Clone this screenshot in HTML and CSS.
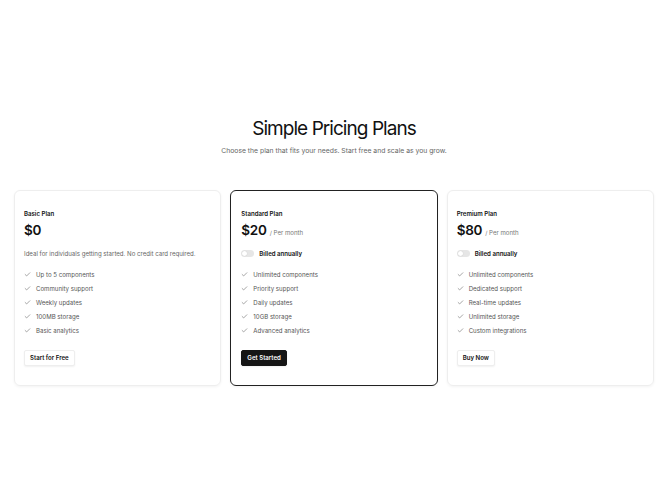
FILE: index.html
```html
<!DOCTYPE html>
<html lang="en">
<head>
    <meta charset="UTF-8">
    <meta name="viewport" content="width=device-width, initial-scale=1.0">
    <title>Simple Pricing Plans</title>
    <link rel="stylesheet" href="styles.css">
</head>
<body>
    <main class="pricing">
        <div class="pricing-header">
            <h1>Simple Pricing Plans</h1>
            <p>Choose the plan that fits your needs. Start free and scale as you grow.</p>
        </div>
        <div class="plans">
            <div class="plan">
                <h3>Basic Plan</h3>
                <div class="price"><span class="amount">$0</span></div>
                <p class="desc">Ideal for individuals getting started. No credit card required.</p>
                <ul class="features">
                    <li><svg viewBox="0 0 24 24"><path d="M20 6 9 17l-5-5"/></svg>Up to 5 components</li>
                    <li><svg viewBox="0 0 24 24"><path d="M20 6 9 17l-5-5"/></svg>Community support</li>
                    <li><svg viewBox="0 0 24 24"><path d="M20 6 9 17l-5-5"/></svg>Weekly updates</li>
                    <li><svg viewBox="0 0 24 24"><path d="M20 6 9 17l-5-5"/></svg>100MB storage</li>
                    <li><svg viewBox="0 0 24 24"><path d="M20 6 9 17l-5-5"/></svg>Basic analytics</li>
                </ul>
                <button class="btn">Start for Free</button>
            </div>
            <div class="plan featured">
                <h3>Standard Plan</h3>
                <div class="price"><span class="amount">$20</span><span class="per">/ Per month</span></div>
                <label class="billing"><span class="toggle"></span>Billed annually</label>
                <ul class="features">
                    <li><svg viewBox="0 0 24 24"><path d="M20 6 9 17l-5-5"/></svg>Unlimited components</li>
                    <li><svg viewBox="0 0 24 24"><path d="M20 6 9 17l-5-5"/></svg>Priority support</li>
                    <li><svg viewBox="0 0 24 24"><path d="M20 6 9 17l-5-5"/></svg>Daily updates</li>
                    <li><svg viewBox="0 0 24 24"><path d="M20 6 9 17l-5-5"/></svg>10GB storage</li>
                    <li><svg viewBox="0 0 24 24"><path d="M20 6 9 17l-5-5"/></svg>Advanced analytics</li>
                </ul>
                <button class="btn btn-dark">Get Started</button>
            </div>
            <div class="plan">
                <h3>Premium Plan</h3>
                <div class="price"><span class="amount">$80</span><span class="per">/ Per month</span></div>
                <label class="billing"><span class="toggle"></span>Billed annually</label>
                <ul class="features">
                    <li><svg viewBox="0 0 24 24"><path d="M20 6 9 17l-5-5"/></svg>Unlimited components</li>
                    <li><svg viewBox="0 0 24 24"><path d="M20 6 9 17l-5-5"/></svg>Dedicated support</li>
                    <li><svg viewBox="0 0 24 24"><path d="M20 6 9 17l-5-5"/></svg>Real-time updates</li>
                    <li><svg viewBox="0 0 24 24"><path d="M20 6 9 17l-5-5"/></svg>Unlimited storage</li>
                    <li><svg viewBox="0 0 24 24"><path d="M20 6 9 17l-5-5"/></svg>Custom integrations</li>
                </ul>
                <button class="btn">Buy Now</button>
            </div>
        </div>
    </main>
</body>
</html>
```

FILE: styles.css
```css
body {
    font-family: Inter, "Noto Sans", sans-serif;
    margin: 0;
    padding: 0;
    background-color: #fff;
    color: #111;
    min-height: 100vh;
    display: flex;
    flex-direction: column;
    justify-content: center;
}
.pricing {
    width: 640px;
    margin: 0 auto;
}
.pricing-header {
    text-align: center;
    margin-bottom: 33px;
}
.pricing-header h1 {
    margin: 0;
    font-size: 19px;
    line-height: 26px;
    font-weight: 400;
    letter-spacing: -0.05em;
}
.pricing-header p {
    margin: 3px 0 0;
    font-size: 6.8px;
    line-height: 12px;
    color: #666;
}
.plans {
    display: grid;
    grid-template-columns: repeat(3, 1fr);
    gap: 9px;
}
.plan {
    border: 1px solid #eee;
    border-radius: 6px;
    padding: 18px 9px 19px;
    box-shadow: 0 1px 3px rgba(0, 0, 0, 0.05);
}
.plan.featured {
    border: 1.5px solid #222;
    padding: 18px 10px 19px;
}
.plan h3 {
    margin: 0 0 2px;
    font-size: 6.1px;
    line-height: 10px;
    font-weight: 600;
}
.price {
    display: flex;
    align-items: baseline;
    gap: 3px;
    height: 18px;
    line-height: 18px;
    margin-bottom: 10px;
}
.price .amount {
    font-size: 13.5px;
    font-weight: 600;
    letter-spacing: -0.02em;
}
.price .per {
    font-size: 6.1px;
    line-height: 10px;
    color: #777;
}
.desc {
    margin: 0;
    font-size: 6.1px;
    line-height: 10px;
    color: #666;
}
.billing {
    display: flex;
    align-items: center;
    gap: 5px;
    height: 10px;
    font-size: 6.1px;
    line-height: 10px;
    font-weight: 600;
}
.toggle {
    width: 13px;
    height: 7px;
    border-radius: 4px;
    background-color: #e6e6e6;
    position: relative;
}
.toggle::after {
    content: "";
    position: absolute;
    top: 1px;
    left: 1px;
    width: 5px;
    height: 5px;
    border-radius: 50%;
    background-color: #fff;
    box-shadow: 0 0 1px rgba(0, 0, 0, 0.2);
}
.features {
    list-style: none;
    margin: 11px 0 0;
    padding: 0;
    display: flex;
    flex-direction: column;
    gap: 4px;
}
.features li {
    display: flex;
    align-items: center;
    gap: 5px;
    font-size: 6.1px;
    line-height: 10px;
    color: #555;
}
.features svg {
    width: 7px;
    height: 7px;
    fill: none;
    stroke: #666;
    stroke-width: 2;
    stroke-linecap: round;
    stroke-linejoin: round;
}
.btn {
    margin-top: 14px;
    height: 16px;
    padding: 0 5px;
    font-family: inherit;
    font-size: 6.1px;
    font-weight: 600;
    color: #111;
    background-color: #fff;
    border: 1px solid #eee;
    border-radius: 2px;
    box-shadow: 0 1px 2px rgba(0, 0, 0, 0.06);
    cursor: pointer;
}
.btn-dark {
    background-color: #151515;
    border-color: #151515;
    color: #fff;
}
```
